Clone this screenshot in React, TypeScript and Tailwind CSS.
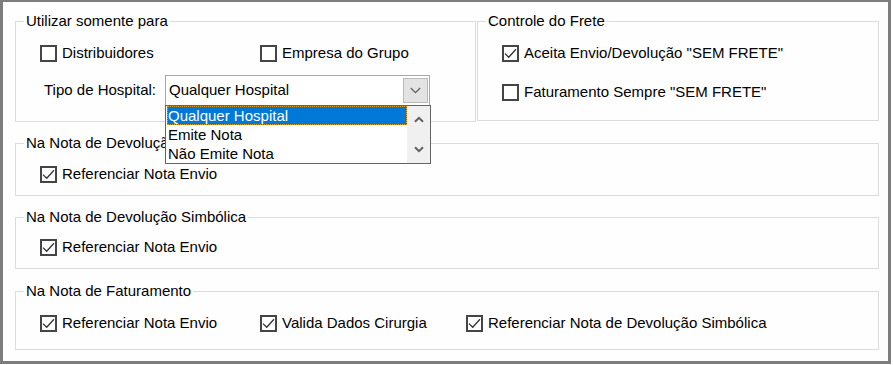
import type { ReactNode } from 'react';

function Box({ checked }: { checked?: boolean }) {
  return (
    <span className="flex h-[17px] w-[17px] shrink-0 items-center justify-center border-2 border-[#454545] bg-white">
      {checked && (
        <svg width="13" height="13" viewBox="0 0 13 13" fill="none">
          <path d="M1 6.6 L4.7 10.2 L12 2.2" stroke="#333" strokeWidth="1.3" />
        </svg>
      )}
    </span>
  );
}

function CheckItem({ label, checked, className = '' }: { label: string; checked?: boolean; className?: string }) {
  return (
    <div className={`flex h-[20px] items-center gap-[5px] ${className}`}>
      <Box checked={checked} />
      <span className="whitespace-nowrap">{label}</span>
    </div>
  );
}

function Group({ title, className = '', children }: { title: string; className?: string; children: ReactNode }) {
  return (
    <fieldset className={`border border-[#dcdcdc] ${className}`}>
      <legend className="ml-[8px] px-[2px] leading-[20px]">{title}</legend>
      <div className="pl-[24px]">{children}</div>
    </fieldset>
  );
}

function HospitalCombo() {
  const items = ['Qualquer Hospital', 'Emite Nota', 'Não Emite Nota'];
  return (
    <div className="relative h-[31px] w-[265px]">
      {/* closed combobox */}
      <div className="flex h-full w-full items-center border border-[#a8a8a8] bg-white pl-[3px] pr-[1px]">
        <span className="flex-1">Qualquer Hospital</span>
        <span className="flex h-[25px] w-[25px] items-center justify-center border border-[#b9b9b9] bg-[#e3e3e3]">
          <svg width="11" height="7" viewBox="0 0 11 7" fill="none">
            <path d="M0.8 1 L5.5 5.7 L10.2 1" stroke="#5a5a5a" strokeWidth="1.1" />
          </svg>
        </span>
      </div>

      {/* open list, drawn over the group below */}
      <div className="absolute left-0 top-[30px] z-10 flex h-[59px] w-[266px] border border-[#646464] bg-white">
        <div className="flex-1 pl-[1px]">
          {items.map((it, i) => (
            <div
              key={it}
              className={`flex h-[19px] items-center pl-[1px] leading-[19px] ${
                i === 0 ? 'bg-[#0078d7] text-white outline-1 outline-dotted outline-[#d9a030] -outline-offset-1' : ''
              }`}
            >
              {it}
            </div>
          ))}
        </div>
        <div className="flex w-[23px] flex-col items-center justify-between bg-[#f0f0f0] py-[10px]">
          <svg width="10" height="7" viewBox="0 0 10 7" fill="none">
            <path d="M1 5.8 L5 1.8 L9 5.8" stroke="#606060" strokeWidth="2" />
          </svg>
          <svg width="10" height="7" viewBox="0 0 10 7" fill="none">
            <path d="M1 1.2 L5 5.2 L9 1.2" stroke="#606060" strokeWidth="2" />
          </svg>
        </div>
      </div>
    </div>
  );
}

export default function App() {
  return (
    <div className="h-[365px] w-[893px] bg-white font-['Liberation_Sans',Arial,sans-serif] text-[15px] text-black">
      <div className="h-[364px] w-[891px] border-b-[3px] border-l-[3px] border-r-[3px] border-t-2 border-[#7d7d7d] bg-[#fefefe] pl-[12px] pr-[9px] pt-[9px]">
        {/* top row */}
        <div className="flex gap-[1px]">
          <Group title="Utilizar somente para" className="h-[111px] w-[461px]">
            <div className="mt-[12px] flex">
              <CheckItem label="Distribuidores" className="w-[220px]" />
              <CheckItem label="Empresa do Grupo" />
            </div>
            <div className="mt-[12px] flex items-center pl-[4px]">
              <span className="w-[121px]">Tipo de Hospital:</span>
              <HospitalCombo />
            </div>
          </Group>

          <Group title="Controle do Frete" className="h-[110px] flex-1">
            <CheckItem label={'Aceita Envio/Devolução "SEM FRETE"'} checked className="mt-[12px]" />
            <CheckItem label={'Faturamento Sempre "SEM FRETE"'} className="mt-[19px]" />
          </Group>
        </div>

        <Group title="Na Nota de Devolução" className="mt-[11px] h-[63px]">
          <CheckItem label="Referenciar Nota Envio" checked className="mt-[11px]" />
        </Group>

        <Group title="Na Nota de Devolução Simbólica" className="mt-[11px] h-[62px]">
          <CheckItem label="Referenciar Nota Envio" checked className="mt-[10px]" />
        </Group>

        <Group title="Na Nota de Faturamento" className="mt-[12px] h-[69px]">
          <div className="mt-[12px] flex">
            <CheckItem label="Referenciar Nota Envio" checked className="w-[220px]" />
            <CheckItem label="Valida Dados Cirurgia" checked className="w-[206px]" />
            <CheckItem label="Referenciar Nota de Devolução Simbólica" checked />
          </div>
        </Group>
      </div>
    </div>
  );
}
